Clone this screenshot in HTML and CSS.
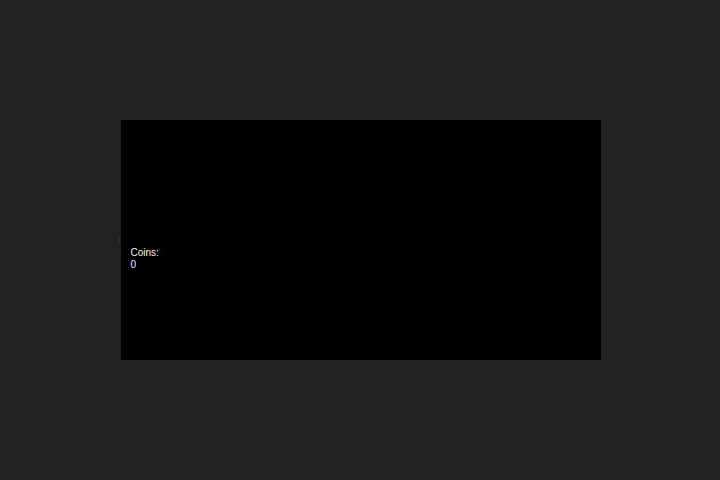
FILE: index.html
```html
<!DOCTYPE html>
<html>
<head>
<meta charset="utf-8">
<link rel="stylesheet" href="styles.css">
</head>
<body>
<div class="stage">
  <div class="mark"></div>
  <div class="game">
    <div class="hud">Coins:<br>0</div>
  </div>
</div>
</body>
</html>
```
FILE: styles.css
```css
html, body {
  margin: 0;
  padding: 0;
  background: #222222;
  width: 720px;
  height: 480px;
  overflow: hidden;
  font-family: "Liberation Sans", Arial, sans-serif;
}
.stage {
  height: 480px;
  display: flex;
  align-items: center;
  justify-content: center;
  padding-left: 1px;
  box-sizing: border-box;
}
.mark {
  width: 2px;
  height: 6px;
  background: #2c2c2c;
  margin-right: 1px;
  margin-left: -3px;
}
.game {
  position: relative;
  width: 480px;
  height: 240px;
  background: #000000;
}
.hud {
  position: absolute;
  left: 10px;
  top: 127px;
  color: #f2f2f2;
  font-size: 10px;
  line-height: 11.5px;
}
```
